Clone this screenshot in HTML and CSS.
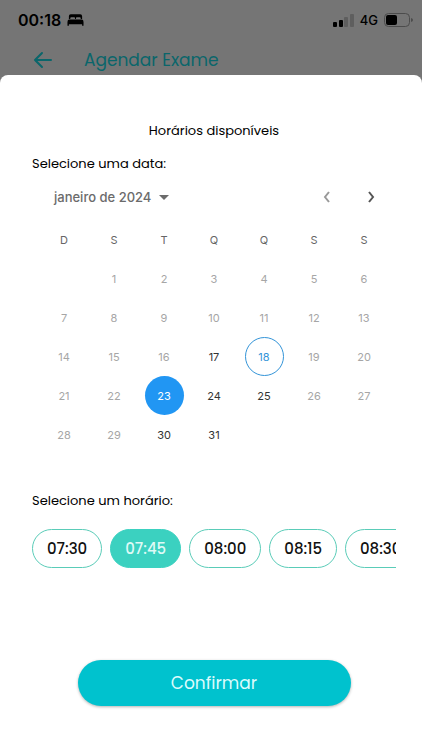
FILE: index.html
```
<!DOCTYPE html>
<html lang="pt-BR">

<head>
    <meta charset="UTF-8">
    <meta name="viewport" content="width=device-width, initial-scale=1.0">
    <title>Agendar Exame</title>
    <link rel="stylesheet" href="styles.css">
</head>

<body>

    <div class="status_bar">
        <span class="status_time">00:18</span>
        <svg class="bed_icon" width="17" height="12" viewBox="0 0 18 12">
            <path d="M2 5V2Q2 0 4 0H14Q16 0 16 2V5H14.500V4Q14.500 3 13.500 3H10.500Q9.500 3 9.500 4V5H8.500V4Q8.500 3 7.500 3H4.500Q3.500 3 3.500 4V5Z" />
            <path d="M2.500 5.500H15.500Q17.500 5.500 17.500 8V12H16V10.500H2V12H0.500V8Q0.500 5.500 2.500 5.500Z" />
        </svg>
        <div class="status_right">
            <svg width="21" height="13" viewBox="0 0 21 13">
                <rect x="0" y="8" width="4" height="5" rx="1" />
                <rect x="6" y="6" width="4" height="7" rx="1" />
                <rect x="11" y="3" width="4" height="10" rx="1" fill="#5e5e5e" />
                <rect x="17" y="0" width="4" height="13" rx="1" fill="#5e5e5e" />
            </svg>
            <span class="status_network">4G</span>
            <svg width="29" height="14" viewBox="0 0 29 14">
                <rect x="0.500" y="0.500" width="25" height="13" rx="4" fill="none" stroke="#4c4c4c" />
                <rect x="2" y="2" width="11" height="10" rx="2" />
                <path d="M27 5Q29 5.500 29 7T27 9Z" fill="#4c4c4c" />
            </svg>
        </div>
    </div>

    <header class="app_header">
        <button class="back_button" type="button" aria-label="Voltar">
            <svg width="20" height="18" viewBox="0 0 20 18">
                <path d="M18 9H2M9 2L2 9L9 16" />
            </svg>
        </button>
        <h1>Agendar Exame</h1>
    </header>

    <main class="sheet">
        <h2 class="sheet_title">Horários disponíveis</h2>
        <h3 class="section_label">Selecione uma data:</h3>

        <div class="calendar">
            <div class="calendar_head">
                <button class="month_button" type="button">
                    janeiro de 2024
                    <svg width="10" height="5" viewBox="0 0 10 5">
                        <path d="M0 0H10L5 5Z" fill="currentColor" />
                    </svg>
                </button>
                <div class="month_nav">
                    <button type="button" aria-label="Mês anterior" disabled>
                        <svg width="8" height="12" viewBox="0 0 8 12">
                            <path d="M6 1L2 6L6 11" />
                        </svg>
                    </button>
                    <button type="button" aria-label="Próximo mês">
                        <svg width="8" height="12" viewBox="0 0 8 12">
                            <path d="M2 1L6 6L2 11" />
                        </svg>
                    </button>
                </div>
            </div>
            <table class="calendar_table">
                <thead>
                    <tr>
                        <th>D</th>
                        <th>S</th>
                        <th>T</th>
                        <th>Q</th>
                        <th>Q</th>
                        <th>S</th>
                        <th>S</th>
                    </tr>
                </thead>
                <tbody>
                    <tr>
                        <td></td>
                        <td><button type="button" disabled>1</button></td>
                        <td><button type="button" disabled>2</button></td>
                        <td><button type="button" disabled>3</button></td>
                        <td><button type="button" disabled>4</button></td>
                        <td><button type="button" disabled>5</button></td>
                        <td><button type="button" disabled>6</button></td>
                    </tr>
                    <tr>
                        <td><button type="button" disabled>7</button></td>
                        <td><button type="button" disabled>8</button></td>
                        <td><button type="button" disabled>9</button></td>
                        <td><button type="button" disabled>10</button></td>
                        <td><button type="button" disabled>11</button></td>
                        <td><button type="button" disabled>12</button></td>
                        <td><button type="button" disabled>13</button></td>
                    </tr>
                    <tr>
                        <td><button type="button" disabled>14</button></td>
                        <td><button type="button" disabled>15</button></td>
                        <td><button type="button" disabled>16</button></td>
                        <td><button type="button">17</button></td>
                        <td><button type="button" class="today">18</button></td>
                        <td><button type="button" disabled>19</button></td>
                        <td><button type="button" disabled>20</button></td>
                    </tr>
                    <tr>
                        <td><button type="button" disabled>21</button></td>
                        <td><button type="button" disabled>22</button></td>
                        <td><button type="button" class="selected">23</button></td>
                        <td><button type="button">24</button></td>
                        <td><button type="button">25</button></td>
                        <td><button type="button" disabled>26</button></td>
                        <td><button type="button" disabled>27</button></td>
                    </tr>
                    <tr>
                        <td><button type="button" disabled>28</button></td>
                        <td><button type="button" disabled>29</button></td>
                        <td><button type="button">30</button></td>
                        <td><button type="button">31</button></td>
                        <td></td>
                        <td></td>
                        <td></td>
                    </tr>
                </tbody>
            </table>
        </div>

        <h3 class="section_label">Selecione um horário:</h3>
        <div class="time_list">
            <button class="time_item" type="button">07:30</button>
            <button class="time_item active" type="button">07:45</button>
            <button class="time_item" type="button">08:00</button>
            <button class="time_item" type="button">08:15</button>
            <button class="time_item" type="button">08:30</button>
        </div>

        <button class="confirm_button" type="button">Confirmar</button>
    </main>

</body>

</html>
```
FILE: styles.css
```
* {
    box-sizing: border-box;
}

body {
    display: flex;
    flex-direction: column;
    min-height: 100vh;
    margin: 0;
    background: #757575;
    color: #000;
    font-family: Poppins, Inter, sans-serif;
}

button {
    padding: 0;
    border: none;
    background: none;
    color: inherit;
    font-family: inherit;
}

h1,
h2,
h3 {
    margin: 0;
    font-weight: 400;
}

/* Status bar */
.status_bar {
    display: flex;
    align-items: center;
    height: 40px;
    padding: 0 9px 0 18px;
    color: #000;
    font-family: Inter, sans-serif;
}

.status_time {
    font-size: 16px;
    font-weight: 600;
}

.bed_icon {
    margin-left: 6px;
}

.status_right {
    display: flex;
    align-items: center;
    gap: 6px;
    margin-left: auto;
}

.status_network {
    font-size: 13px;
    font-weight: 500;
}

/* Header behind the sheet */
.app_header {
    display: flex;
    align-items: center;
    gap: 31px;
    height: 35px;
    padding: 4px 33px 0;
    color: #0a666b;
}

.app_header h1 {
    font-size: 17px;
}

.back_button {
    display: flex;
}

.back_button svg,
.month_nav svg {
    fill: none;
    stroke: currentColor;
    stroke-width: 2;
}

.back_button svg {
    stroke-linecap: round;
    stroke-linejoin: round;
}

/* Sheet */
.sheet {
    display: flex;
    flex: 1;
    flex-direction: column;
    padding: 46px 26px 24px 32px;
    border-radius: 8px 8px 0 0;
    background: #fff;
}

.sheet_title {
    margin-bottom: 13px;
    font-size: 13px;
    line-height: 20px;
    text-align: center;
}

.section_label {
    font-size: 13px;
    line-height: 20px;
}

/* Calendar */
.calendar {
    margin: 3px 7px 37px;
    font-family: Inter, sans-serif;
}

.calendar_head {
    display: flex;
    align-items: center;
    justify-content: space-between;
    height: 40px;
    margin-bottom: 4px;
    padding: 0 12px 0 15px;
}

.month_button {
    display: flex;
    align-items: center;
    gap: 8px;
    color: #6b6b6b;
    font-size: 13px;
    font-weight: 500;
}

.month_nav {
    display: flex;
    gap: 32px;
}

.month_nav button {
    display: flex;
    justify-content: center;
    width: 12px;
    color: #555;
}

.month_nav button:disabled {
    color: #999;
}

.calendar_table {
    width: 100%;
    border-collapse: collapse;
    table-layout: fixed;
    font-size: 11px;
}

.calendar_table th {
    height: 38px;
    padding: 0;
    color: #666;
    font-weight: 400;
}

.calendar_table td {
    height: 39px;
    padding: 0;
    text-align: center;
}

.calendar_table td button {
    display: block;
    width: 39px;
    height: 39px;
    margin: 0 auto;
    border-radius: 50%;
    color: #333;
    font-size: 11px;
}

.calendar_table td button:disabled {
    color: #a6a6a6;
}

.calendar_table td .today {
    border: 1px solid #3394d8;
    color: #3394d8;
}

.calendar_table td .selected {
    background: #2196f3;
    color: #fff;
}

/* Available times */
.time_list {
    display: flex;
    gap: 8px;
    margin-top: 18px;
    overflow: hidden;
}

.time_item {
    flex: none;
    height: 39px;
    padding: 0 14px;
    border: 1px solid #5accb8;
    border-radius: 20px;
    color: #111;
    font-size: 15px;
    font-weight: 500;
}

.time_item.active {
    border-color: #3bd1c0;
    background: #3bd1c0;
    color: #dffaf6;
}

.confirm_button {
    align-self: center;
    width: 75%;
    height: 46px;
    margin-top: 92px;
    border-radius: 23px;
    background: #00c2ce;
    box-shadow: 0 1px 3px rgba(0, 0, 0, 0.3);
    color: #dcfbfc;
    font-size: 17px;
}
```
